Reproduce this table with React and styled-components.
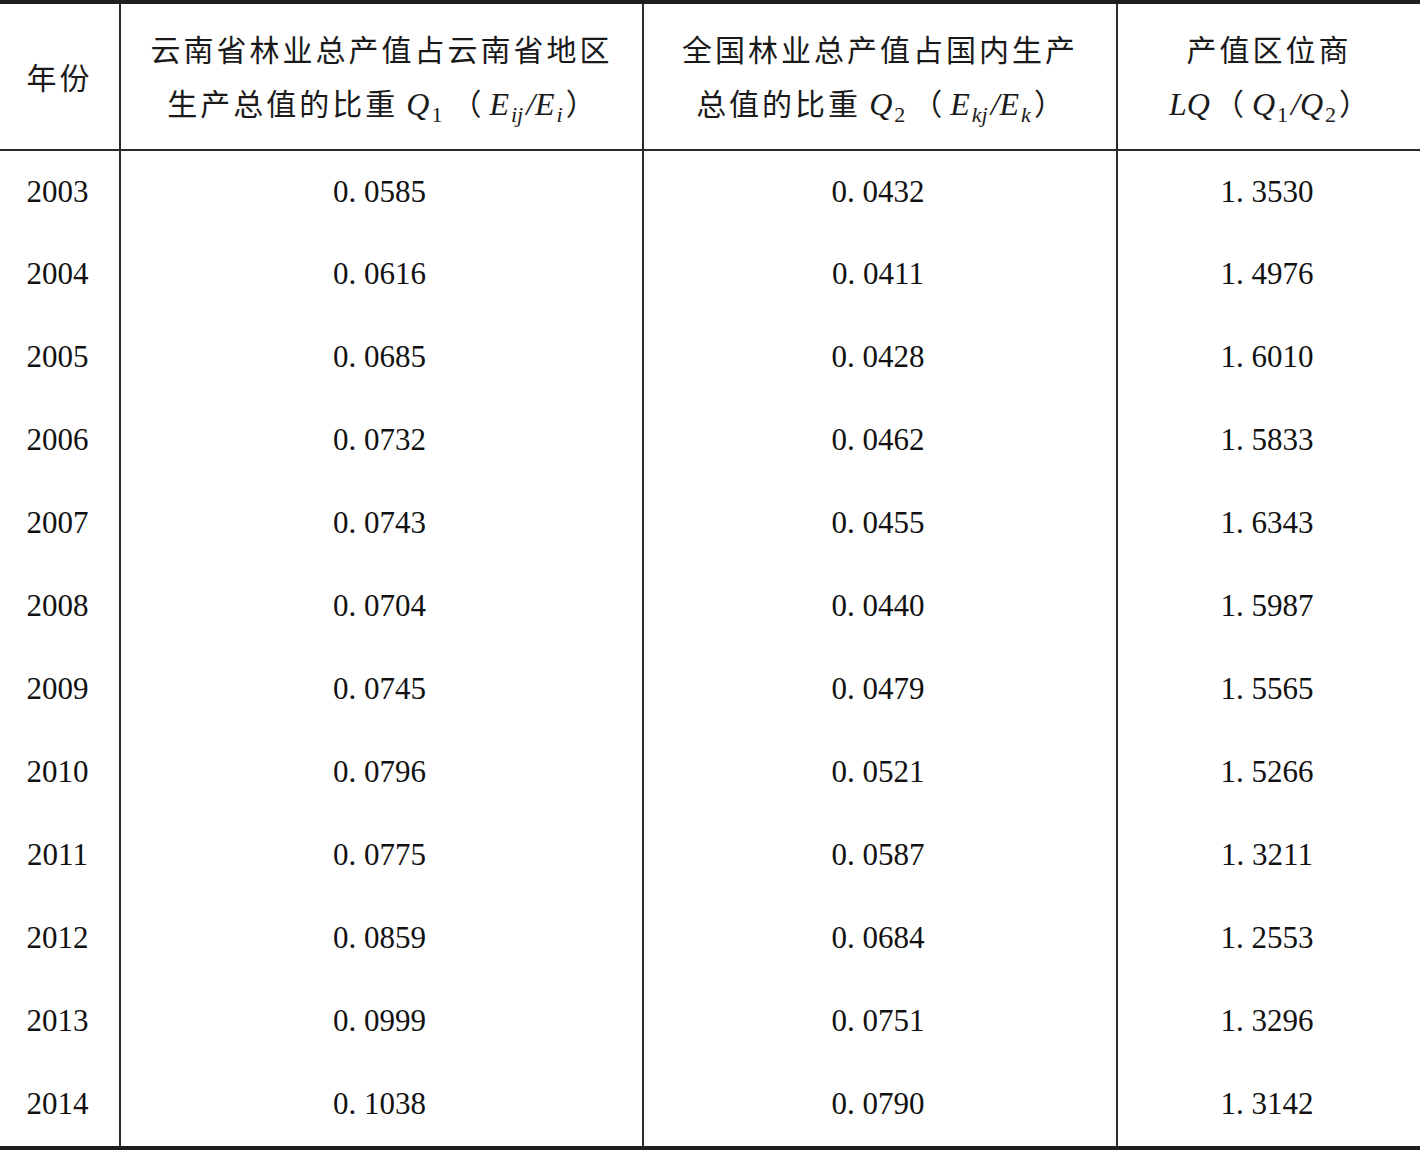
import React from "react";
import styled, { createGlobalStyle } from "styled-components";

const GlobalStyle = createGlobalStyle`
  html, body {
    margin: 0;
    padding: 0;
    background: #fff;
  }
`;

const Frame = styled.div`
  width: 1420px;
  border-top: 4px solid #1e1e1e;
  border-bottom: 4px solid #1e1e1e;
`;

const Table = styled.table`
  width: 100%;
  border-collapse: collapse;
  table-layout: fixed;
  color: #111;
  font-family: "Liberation Serif", "Noto Sans CJK SC", serif;
`;

const HeadRow = styled.tr`
  height: 146px;
  border-bottom: 2px solid #2a2a2a;
`;

const BodyRow = styled.tr`
  height: 83px;
`;

const HeadCell = styled.th`
  font-size: 30px;
  line-height: 54px;
  letter-spacing: 3px;
  text-align: center;
  vertical-align: middle;
  padding: 0 0 2px;
  font-family: "Noto Sans CJK SC", "Liberation Serif", sans-serif;
  font-weight: 400;
  color: #1a1a1a;
  & + & {
    border-left: 2px solid #2a2a2a;
  }
`;

const Cell = styled.td`
  font-size: 31px;
  text-align: center;
  vertical-align: middle;
  padding: 0 4px 1px 0;
  & + & {
    border-left: 2px solid #2a2a2a;
  }
`;

const Var = styled.i`
  font-family: "Liberation Serif", serif;
  font-size: 32px;
  letter-spacing: 0;
  margin-left: ${(p) => p.$gap || 0}px;
`;

const Sub = styled.sub`
  font-family: "Liberation Serif", serif;
  font-style: ${(p) => (p.$italic ? "italic" : "normal")};
  font-size: 22px;
  vertical-align: -7px;
  line-height: 0;
  letter-spacing: 0;
  margin: 0 3px 0 2px;
`;

const Paren = styled.span`
  letter-spacing: 0;
  margin: 0 ${(p) => p.$right || 0}px 0 ${(p) => p.$left || 0}px;
`;

const rows = [
  ["2003", "0. 0585", "0. 0432", "1. 3530"],
  ["2004", "0. 0616", "0. 0411", "1. 4976"],
  ["2005", "0. 0685", "0. 0428", "1. 6010"],
  ["2006", "0. 0732", "0. 0462", "1. 5833"],
  ["2007", "0. 0743", "0. 0455", "1. 6343"],
  ["2008", "0. 0704", "0. 0440", "1. 5987"],
  ["2009", "0. 0745", "0. 0479", "1. 5565"],
  ["2010", "0. 0796", "0. 0521", "1. 5266"],
  ["2011", "0. 0775", "0. 0587", "1. 3211"],
  ["2012", "0. 0859", "0. 0684", "1. 2553"],
  ["2013", "0. 0999", "0. 0751", "1. 3296"],
  ["2014", "0. 1038", "0. 0790", "1. 3142"],
];

export default function App() {
  return (
    <>
      <GlobalStyle />
      <Frame>
        <Table>
          <colgroup>
            <col style={{ width: 120 }} />
            <col style={{ width: 523 }} />
            <col style={{ width: 474 }} />
            <col />
          </colgroup>
          <thead>
            <HeadRow>
              <HeadCell>年份</HeadCell>
              <HeadCell>
                云南省林业总产值占云南省地区
                <br />
                生产总值的比重<Var $gap={8}>Q</Var>
                <Sub>1</Sub>
                <Paren $left={6} $right={8}>（</Paren>
                <Var>E</Var>
                <Sub $italic>ij</Sub>
                <Var>/E</Var>
                <Sub $italic>i</Sub>
                <Paren>）</Paren>
              </HeadCell>
              <HeadCell>
                全国林业总产值占国内生产
                <br />
                总值的比重<Var $gap={8}>Q</Var>
                <Sub>2</Sub>
                <Paren $left={4} $right={8}>（</Paren>
                <Var>E</Var>
                <Sub $italic>kj</Sub>
                <Var>/E</Var>
                <Sub $italic>k</Sub>
                <Paren>）</Paren>
              </HeadCell>
              <HeadCell>
                产值区位商
                <br />
                <Var>LQ</Var>
                <Paren $left={4} $right={8}>（</Paren>
                <Var>Q</Var>
                <Sub>1</Sub>
                <Var>/Q</Var>
                <Sub>2</Sub>
                <Paren>）</Paren>
              </HeadCell>
            </HeadRow>
          </thead>
          <tbody>
            {rows.map((r) => (
              <BodyRow key={r[0]}>
                {r.map((v, i) => (
                  <Cell key={i}>{v}</Cell>
                ))}
              </BodyRow>
            ))}
          </tbody>
        </Table>
      </Frame>
    </>
  );
}
